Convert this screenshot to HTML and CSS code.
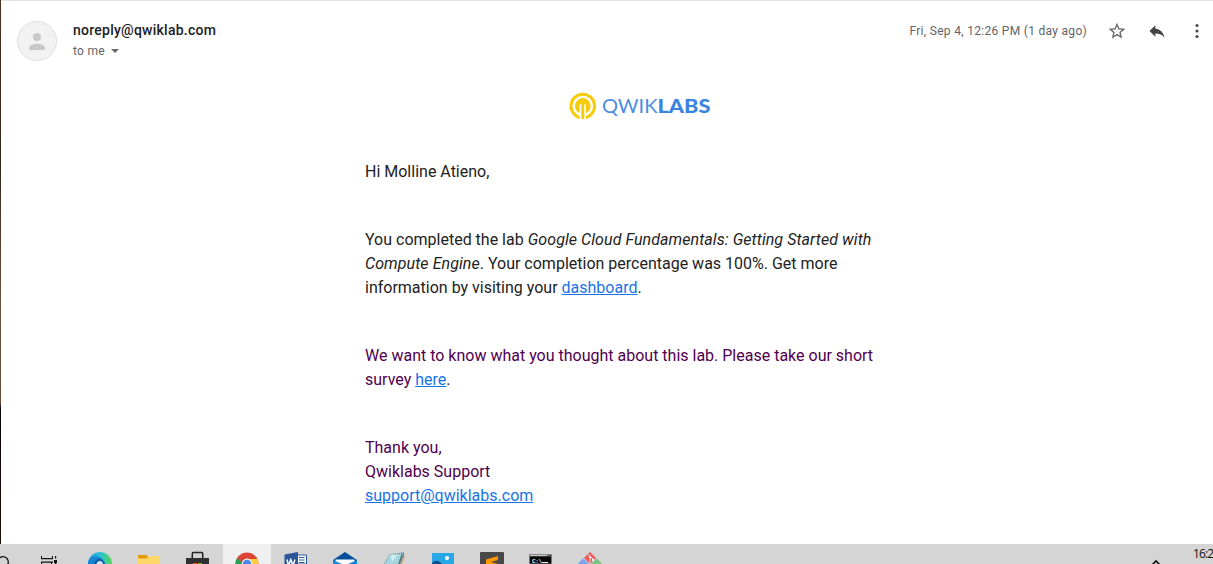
FILE: index.html
```html
<!DOCTYPE html>
<html lang="en">
<head>
<meta charset="utf-8">
<title>Mail</title>
<link rel="stylesheet" href="styles.css">
</head>
<body>
<div class="screen">
  <main class="mail">
    <header class="head">
      <svg class="avatar" viewBox="0 0 40 40"><circle cx="20" cy="20" r="19.5" fill="#f2f2f2" stroke="#dedede"/><circle cx="20" cy="16" r="4" fill="#c8c8c8"/><path d="M12.300 29v-2.200c0-2.700 4.500-4 7.700-4s7.700 1.300 7.700 4V29z" fill="#c8c8c8"/></svg>
      <div class="who">
        <div class="sender">noreply@qwiklab.com</div>
        <div class="to"><span>to me</span><svg width="8" height="4" viewBox="0 0 8 4"><path d="M0 0h8L4 4z" fill="#666"/></svg></div>
      </div>
      <div class="date">Fri, Sep 4, 12:26 PM (1 day ago)</div>
      <div class="actions">
        <svg width="20" height="20" viewBox="0 0 24 24"><path fill="#666" d="M22 9.240l-7.190-.62L12 2 9.190 8.630 2 9.240l5.460 4.730L5.820 21 12 17.270 18.180 21l-1.630-7.030L22 9.240zM12 15.400l-3.760 2.270 1-4.280-3.320-2.880 4.380-.38L12 6.100l1.710 4.040 4.380.38-3.320 2.880 1 4.280L12 15.400z"/></svg>
        <svg width="20" height="20" viewBox="0 0 24 24"><path fill="#444" d="M10 9V5l-7 7 7 7v-4.100c5 0 8.500 1.600 11 5.100-1-5-4-10-11-11z"/></svg>
        <svg width="20" height="20" viewBox="0 0 20 20" fill="#4d4d4d"><circle cx="10" cy="4.500" r="1.600"/><circle cx="10" cy="10" r="1.600"/><circle cx="10" cy="15.500" r="1.600"/></svg>
      </div>
    </header>
    <article class="letter">
      <svg class="logo" width="144" height="30" viewBox="0 0 144 30">
        <circle cx="14.800" cy="14" r="11.800" fill="none" stroke="#f5cc0a" stroke-width="3"/>
        <circle cx="14.800" cy="14" r="7.900" fill="#f5cc0a"/>
        <path d="M11.600 28V14.500q0-3 3.200-3t3.200 3V28z" fill="#fff"/>
        <path d="M13.300 10.500h3V27h-3z" fill="#f5cc0a"/>
        <g fill="#3b83e0" font-family="Lato" font-size="19.500"><text x="34" y="20.500" textLength="55.500" lengthAdjust="spacingAndGlyphs" fill="#4b8de3">QWIK</text><text x="89.500" y="20.500" font-weight="900" textLength="53" lengthAdjust="spacingAndGlyphs">LABS</text></g>
      </svg>
      <p>Hi Molline Atieno,</p>
      <p>You completed the lab <i>Google Cloud Fundamentals: Getting Started with<br>Compute Engine</i>. Your completion percentage was 100%. Get more<br>information by visiting your <a>dashboard</a>.</p>
      <p class="quoted">We want to know what you thought about this lab. Please take our short<br>survey <a>here</a>.</p>
      <p class="quoted">Thank you,<br>Qwiklabs Support<br><a>support@qwiklabs.com</a></p>
    </article>
  </main>
  <footer class="taskbar">
    <svg class="search" viewBox="0 0 24 20"><circle cx="3" cy="18" r="5.300" fill="none" stroke="#111" stroke-width="1.300"/></svg>
    <svg class="views" viewBox="0 0 48 20"><g fill="#111"><path d="M16 12h1v2h10v-2h1v3.200H16zM16 17.500h12v1.200h-1V20h-1v-1.300h-9V20h-1zM30 12h1.200v2.500H30zM29 16h3v3h-3zM30 19h1.200v1H30z"/></g></svg>
    <svg viewBox="0 0 48 20">
      <defs><linearGradient id="edge"><stop offset="0" stop-color="#1e94dc"/><stop offset=".5" stop-color="#28bfd6"/><stop offset="1" stop-color="#5ada55"/></linearGradient></defs>
      <circle cx="24" cy="20" r="12" fill="url(#edge)"/><path d="M12 20c0-5 4-7.500 8-7.500s8 3 9 7.500z" fill="#1684d0"/><path d="M18 20c1-4 4-6 7-5 2 1 3.500 3 4 5z" fill="#0b5ba9"/><path d="M20.500 20c.5-2 1.500-3 3.500-3s2.500 1.500 3 3z" fill="#d8e8f0"/>
    </svg>
    <svg viewBox="0 0 48 20"><path d="M13 11h8.500l1.500 1.500V15H13z" fill="#df9c0c"/><path d="M13 14.500h9l2-2.500h10.500v8H13z" fill="#ffd768"/></svg>
    <svg viewBox="0 0 48 20"><path d="M18.300 15V9.500q0-1 1-1h8.400q1 0 1 1V15" fill="none" stroke="#222" stroke-width="1.500"/><path d="M12 14h23v6H12z" fill="#303030"/><path d="M19 19h4v1h-4z" fill="#f25022"/><path d="M24 19h4v1h-4z" fill="#7fba00"/></svg>
    <svg class="active" viewBox="0 0 48 20"><circle cx="24" cy="20" r="11.500" fill="#dc4538"/><path d="M12.500 20q0-3.500 1.800-6.200L20 20z" fill="#24a354"/><path d="M26 15h8.400q1.100 2.500 1.100 5H26z" fill="#ffce3d"/><circle cx="24" cy="20" r="5.400" fill="#f3f3f3"/><circle cx="24" cy="20" r="4.300" fill="#4688f1"/></svg>
    <svg viewBox="0 0 48 20"><path d="M25 11h9.500v9H25z" fill="#fff" stroke="#2b579a"/><path d="M27 13.500h5.500M27 16h5.500M27 18.500h5.500" stroke="#2b579a"/><path d="M12.500 10.500L26 8v12H12.500z" fill="#2b579a"/><path d="M15 15.500l1.500 6 2.300-6 2.300 6 1.800-6" fill="none" stroke="#fff" stroke-width="1.500"/></svg>
    <svg viewBox="0 0 48 20"><path d="M12 16l12-8 12 8v1H12z" fill="#064e9b"/><path d="M14.500 15.500h19V20h-19z" fill="#fff"/><path d="M12 16l9 4h-9zM36 16l-9 4h9z" fill="#1688dc"/></svg>
    <svg viewBox="0 0 48 20"><path d="M20 10l14-1.500v2L31 20H14z" fill="#4d8091"/><path d="M20 10.500l11.500-.5L28 20H14.500z" fill="#a5d5df"/><path d="M20.500 11l7 0L22 18z" fill="#d2edf0"/><path d="M20 10h13" stroke="#e8f2f2" stroke-dasharray="1 1"/><path d="M33.500 11l1.500 1-3 8h-2z" fill="#c6a274"/></svg>
    <svg viewBox="0 0 48 20"><path d="M13 9h22v11H13z" fill="#29a8e8"/><path d="M13 19q4-4 8-1l2 2H13z" fill="#0c4d8b"/><circle cx="28" cy="14" r="2.100" fill="#fff"/></svg>
    <svg viewBox="0 0 48 20"><path d="M12 9q0-1 1-1h22q1 0 1 1v11H12z" fill="#484848"/><path d="M18 15.500l12-3.500v4l-7 2 7 2H18z" fill="#ff9800"/></svg>
    <svg viewBox="0 0 48 20"><path d="M12.500 10.500h22V20h-22z" fill="#080808" stroke="#777"/><path d="M13 11.500h21" stroke="#c9c9c9" stroke-width="1.500"/><path d="M30 11.500h4" stroke="#555"/><text x="15" y="18.500" font-family="Liberation Mono" font-size="6" font-weight="700" fill="#eee" textLength="10">C:\</text><path d="M25 18.500h6" stroke="#eee"/></svg>
    <svg viewBox="0 0 48 20"><path d="M24 8l6 6-6 6-6-6z" fill="#ef5b59"/><path d="M17.200 14.500L23 20H11.500z" fill="#77a6ef"/><path d="M30.800 14.500L36.500 20H25z" fill="#78c682"/><path d="M22 10l5 5M24 12v8" stroke="#ddd"/><circle cx="24" cy="13" r="1.200" fill="#eee"/><circle cx="27" cy="16" r="1.200" fill="#eee"/></svg>
    <div class="tray"><svg viewBox="0 0 10 20"><path d="M1.500 20.500L5 17l3.500 3.500" fill="none" stroke="#111" stroke-width="1.600"/></svg><span>16:2</span></div>
  </footer>
</div>
</body>
</html>
```
FILE: styles.css
```css
* { box-sizing: border-box; }
body { margin: 0; background: #fff; font-family: Roboto, sans-serif; }
.screen { width: 1213px; height: 564px; display: flex; flex-direction: column; overflow: hidden; }
.mail {
  flex: none;
  height: 544px;
  overflow: hidden;
  border-left: 1px solid;
  border-image: linear-gradient(#4c3020 0, #37261a 30%, #6d513b 55%, #674a38 74%, #0a0606 75%, #1c0c06 100%) 1;
}
.head { display: flex; height: 84px; padding: 20px 6px 0 16px; border-top: 1px solid #e3e3e3; }
.avatar { width: 40px; height: 40px; }
.who { margin-left: 16px; flex: 1; }
.sender { font-size: 14px; line-height: 20px; font-weight: 500; color: #202124; letter-spacing: .25px; margin-top: -1px; }
.to { display: flex; align-items: center; gap: 6px; font-size: 12px; line-height: 20px; color: #5f6368; letter-spacing: .3px; padding-top: 1px; }
.date { font-size: 12px; line-height: 20px; color: #5f6368; letter-spacing: .3px; }
.actions { display: flex; gap: 20px; margin-left: 20px; height: 20px; }
.letter { width: 516px; margin-left: 364px; white-space: nowrap; font-size: 16px; line-height: 24px; color: #222; }
.letter i { letter-spacing: .07px; }
.logo { display: block; margin: 8px 0 38px 203px; }
.letter p { margin: 0 0 44px; }
.letter .quoted { color: #500050; }
.letter a { color: #1a73e8; text-decoration: underline; }
.taskbar { height: 20px; background: #d5d5d5; display: flex; gap: 1px; }
.taskbar > svg { width: 48px; height: 20px; flex: none; }
.taskbar > .search { width: 24px; }
.taskbar > .views { margin-right: 2px; }
.taskbar > .active { background: #f0f0f0; }
.tray { margin-left: auto; display: flex; gap: 32px; font: 12px/20px "Open Sans", sans-serif; color: #111; width: 62px; white-space: nowrap; }
.tray svg { width: 10px; height: 20px; flex: none; }
.tray span { letter-spacing: -.9px; }
```
